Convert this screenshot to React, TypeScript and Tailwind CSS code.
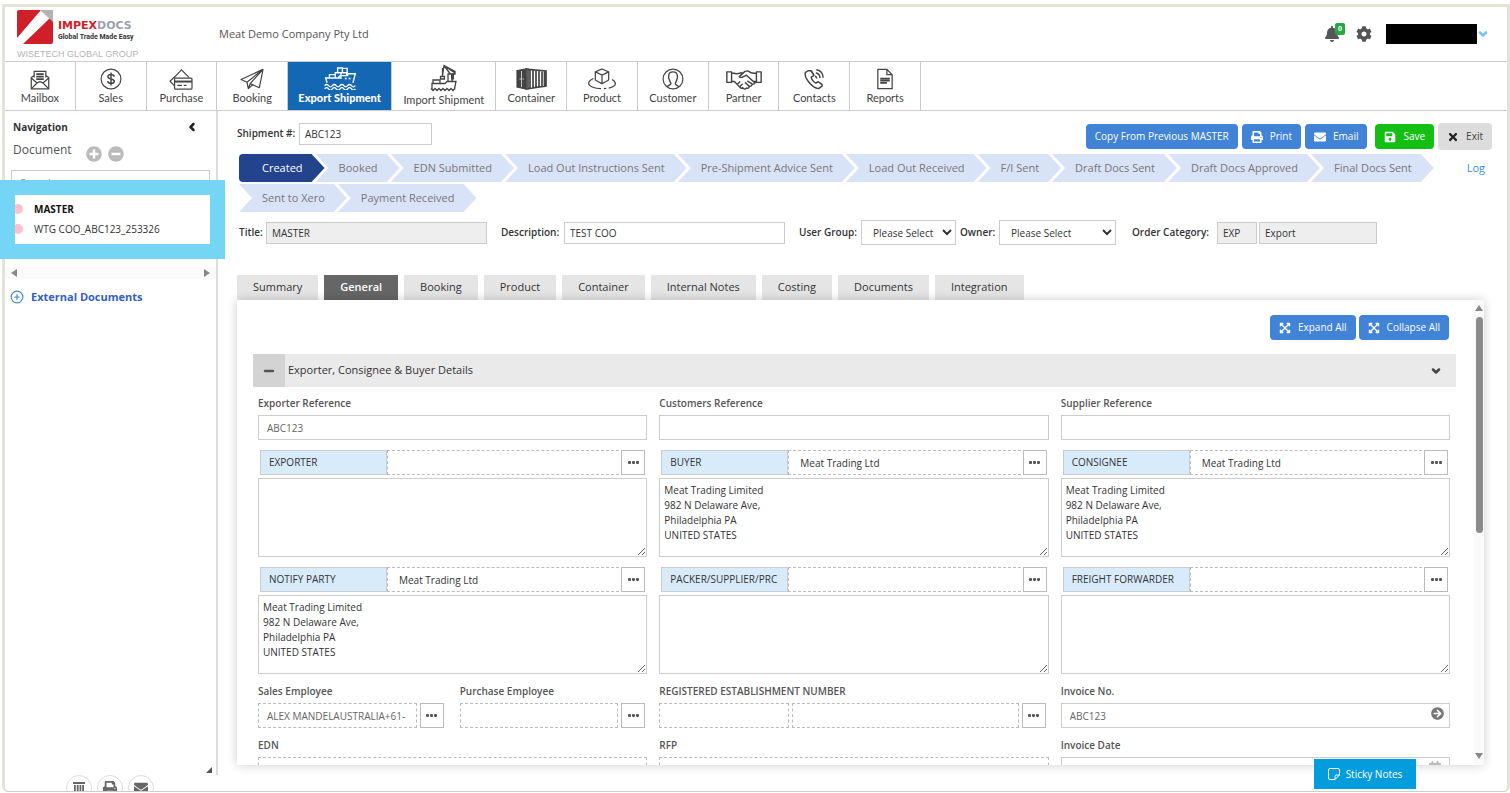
import type { ReactNode } from 'react'
import { FaArrowCircleRight, FaBell, FaCalendarAlt, FaCog, FaEnvelope, FaExpandArrowsAlt, FaMinusCircle, FaPlusCircle, FaPrint, FaSave, FaTimes } from 'react-icons/fa'
import { ChevronDown, ChevronLeft, CirclePlus, Minus } from 'lucide-react'

const icons: Record<string, ReactNode> = {
  Mailbox: (
    <svg viewBox="0 0 24 24" className="size-5" fill="none" stroke="currentColor" strokeWidth="1.5">
      <path d="M5 9V1.5h14V9M5 6.5 1.5 9v13.5h21V9L19 6.5" />
      <path d="M7.5 5h9M7.5 8h9M7.5 11h9" strokeWidth="2" />
      <path d="m1.5 9.5 7 6L2 22M22.5 9.5l-7 6L22 22M8.500 15.500 12 14l3.500 1.500" />
    </svg>
  ),
  Sales: (
    <svg viewBox="0 0 24 24" className="size-[22px]" fill="none" stroke="currentColor" strokeWidth="1.3">
      <circle cx="12" cy="12" r="10.8" />
      <path d="M15.500 9.500c-.3-1.500-1.600-2.300-3.500-2.300s-3.400.9-3.400 2.400c0 3.400 7 1.400 7 4.900 0 1.500-1.500 2.400-3.600 2.400-2 0-3.400-.9-3.600-2.500M12 5v14" strokeWidth="1.6" />
    </svg>
  ),
  Purchase: (
    <svg viewBox="0 0 26 24" className="h-[22px] w-6" fill="none" stroke="currentColor" strokeWidth="1.3">
      <path d="M5.500 10.500 13.500 2l8.500 8.500M6 9.500 1 14.500l5 5" />
      <rect x="6" y="11" width="19" height="12" rx="1" />
      <path d="M6 14.8h19" strokeWidth="2.2" />
      <path d="M9 19h5M16 19h3" />
    </svg>
  ),
  Booking: (
    <svg viewBox="0 0 26 24" className="h-[22px] w-6" fill="none" stroke="currentColor" strokeWidth="1.3" strokeLinejoin="round">
      <path d="M25 1.500 1 12.500l6.500 3L25 1.500 11 17l10 4.500L25 1.500M7.500 15.500l1.500 7L11 17M9 22.500l4.500-4" />
    </svg>
  ),
  'Export Shipment': (
    <svg viewBox="0 0 34 24" className="h-[23px] w-[34px]" fill="none" stroke="currentColor" strokeWidth="1.4">
      <path d="M3.500 16.500 2 11.500h13l2-2.500h8v-2h8l-2.500 9.500M12 6h6v5.500h-6zM18 6h6v3h-6M14.500 1h5v5h-5zM19.500 1.500h5V6h-5M6 8h6v3.500H6zM22 12h2M26 12h2" />
      <path d="M1 19.500q2-2.500 4 0t4 0 4 0 4 0 4 0 4 0 4 0 4 0M1 22.800q2-2.500 4 0t4 0 4 0 4 0 4 0 4 0 4 0 4 0" />
    </svg>
  ),
  'Import Shipment': (
    <svg viewBox="0 0 28 28" className="mt-0.5 size-7" fill="none" stroke="currentColor" strokeWidth="1.3">
      <path d="M2 25v-5.500h13l2-2h9L24.500 25M3 19.500V16h7v3.500M6 16h4M18 17.500V10h4v7.500M25 9 14 1.500 12.500 12M14 1.500l6 8M14 1.500l11 6V10h-5M12.500 4v8M10.500 12.500h4v2.500h-4z" />
      <path d="m1 24.500 2 2 2-2 2 2 2-2 2 2 2-2 2 2 2-2 2 2 2-2 2 2 2-2" />
      <path d="M22.500 9.500v6" strokeWidth="3" />
    </svg>
  ),
  Container: (
    <svg viewBox="0 0 31 22" className="h-[22px] w-[31px]" fill="none" stroke="currentColor" strokeWidth="1.2">
      <path d="m1 2.500 9-1.500v20L1 19z" fill="currentColor" />
      <path d="M10 1h2v20h-2zM12 1.300 30 3v15L12 20.700M14 2v18.500M17 2v18M20 2.200v17.500M23 2.500v17M26 2.800V19M28.500 3v15.500" strokeWidth="1.7" />
      <path d="M3.500 11H5M6.500 11H8M5.500 3v16" stroke="white" strokeWidth=".7" />
    </svg>
  ),
  Product: (
    <svg viewBox="0 0 30 23" className="h-[22px] w-[30px]" fill="none" stroke="currentColor" strokeWidth="1.3">
      <path d="m15 1 7 3v8.500l-7 4-7-4V4zM8 4l7 3.500L22 4M15 7.500v9M6 11c-3 1.500-5 3-5 5 0 3 6 5.500 13 5.500M17 21.500l2.500-.2M22 21c4-1 7-2.500 7-4.500 0-1.500-1-3-3.500-4.500" />
    </svg>
  ),
  Customer: (
    <svg viewBox="0 0 24 24" className="size-[22px]" fill="none" stroke="currentColor" strokeWidth="1.3">
      <circle cx="12" cy="12" r="10.8" />
      <path d="M5.500 20.500c1.500-1.500 4-2 4.200-3.500.1-1-.8-1.700-1.400-3.300C7.500 12 7 10 7.200 8.300 7.500 5.700 9.300 4.200 12 4.200s4.500 1.500 4.800 4.100c.2 1.700-.3 3.700-.9 5.400-.6 1.600-1.600 2.300-1.400 3.300.2 1.500 2.500 2 4 3.500" strokeWidth="1.5" />
    </svg>
  ),
  Partner: (
    <svg viewBox="0 0 38 22" className="h-[21px] w-[38px]" fill="none" stroke="currentColor" strokeWidth="1.5" strokeLinejoin="round">
      <path d="M1 3h5v11H1zM32 3h5v11h-5zM6 4.500h2.500q3 1 7-.5l3 .5M32 4.500h-2.500q-3 0-6.500-2.500l-3 .5-6 5.500q1.500 2 4.500 0l3-1.500 9 8q-1 2-3 1M6 13h3l6 6.500q2 1.500 3-.5M32 13h-2.500M27.500 15.500q0 3-3 2.500 0 2.500-3 2-1 1.500-3 .5l-1.500-1M12 16l3-3M14.500 18.500l3-3M20 14l4.500 4M22.500 12.500l5 3" />
    </svg>
  ),
  Contacts: (
    <svg viewBox="0 0 24 24" className="size-[22px]" fill="none" stroke="currentColor" strokeWidth="1.6" strokeLinejoin="round">
      <path d="M5.500 3 2.500 5C1 10 9 21.500 17 22.500l4-3-.5-2-4-2.500-2.500 1.500c-2-.5-5-4.500-5-6.500L12 8 9 3zM8.500 3 12 8M16.500 15l4 3" />
      <path d="M13 9c1.200.3 2 1.200 2 2.500M14 5.500c2.500.3 4.500 2.500 4.500 5.500M14.500 2c4.500.3 7.500 4 7.500 8.500" />
    </svg>
  ),
  Reports: (
    <svg viewBox="0 0 18 23" className="h-[22px] w-[18px]" fill="none" stroke="currentColor" strokeWidth="1.3">
      <path d="M1.500 1.500H11l5.500 5.500v14.500h-15zM11 1.500V7h5.500" />
      <path d="M4 11h10M4 13.300h10M4 15.600h7" strokeWidth="1.8" />
    </svg>
  ),
}

const menu = ['Mailbox', 'Sales', 'Purchase', 'Booking', 'Export Shipment', 'Import Shipment', 'Container', 'Product', 'Customer', 'Partner', 'Contacts', 'Reports']

const steps = [
  'Created',
  'Booked',
  'EDN Submitted',
  'Load Out Instructions Sent',
  'Pre-Shipment Advice Sent',
  'Load Out Received',
  'F/I Sent',
  'Draft Docs Sent',
  'Draft Docs Approved',
  'Final Docs Sent',
  'Sent to Xero',
  'Payment Received',
]

const tabs = ['Summary', 'General', 'Booking', 'Product', 'Container', 'Internal Notes', 'Costing', 'Documents', 'Integration']

const address = 'Meat Trading Limited\n982 N Delaware Ave,\nPhiladelphia PA\nUNITED STATES'

const parties = [
  { label: 'EXPORTER', name: '', details: '' },
  { label: 'BUYER', name: 'Meat Trading Ltd', details: address },
  { label: 'CONSIGNEE', name: 'Meat Trading Ltd', details: address },
  { label: 'NOTIFY PARTY', name: 'Meat Trading Ltd', details: address },
  { label: 'PACKER/SUPPLIER/PRC', name: '', details: '' },
  { label: 'FREIGHT FORWARDER', name: '', details: '' },
]

function Logo() {
  return (
    <div className="ml-3 w-[190px] shrink-0 pt-[3px]">
      <div className="flex items-end gap-[5px]">
        <svg viewBox="0 0 36 34" className="h-[34px] w-9">
          <path d="M2 0h22L0 28V2q0-2 2-2z" fill="#cf2029" />
          <path d="M34 34H6L33 8l3 2v22q0 2-2 2z" fill="#cf2029" />
          <path d="M23 0h13v12z" fill="#b3b3b3" />
        </svg>
        <div className="pb-0.5">
          <p className="font-['DejaVu_Sans'] text-[11px] leading-3 font-bold text-gray-400">
            <span className="text-[#cf2029]">IMPEX</span>DOCS
          </p>
          <p className="font-['Roboto'] text-[7px] leading-[10px] font-bold whitespace-nowrap text-[#333]">Global Trade Made Easy</p>
        </div>
      </div>
      <p className="mt-1 font-['Liberation_Sans'] text-[9px] leading-3 whitespace-nowrap text-[#b5b5b5]">WISETECH GLOBAL GROUP</p>
    </div>
  )
}

function Header() {
  return (
    <header className="flex h-[55px] shrink-0 border-b border-[#ccc]">
      <Logo />
      <p className="flex-1 self-center pl-3 text-[11px] text-[#555]">Meat Demo Company Pty Ltd</p>
      <div className="flex items-center pr-[18px] text-[#555]">
        <button aria-label="Notifications" className="relative mr-4">
          <FaBell className="size-4" />
          <span className="absolute -top-[3px] left-[11px] rounded-xs bg-[#28a745] px-[3px] text-[7px] leading-3 font-bold text-white">0</span>
        </button>
        <button aria-label="Settings" className="mr-3.5">
          <FaCog className="size-4" />
        </button>
        <div className="h-5 w-[91px] bg-black" />
        <button aria-label="Account">
          <ChevronDown className="size-3 text-[#7cc0f5]" strokeWidth={5} />
        </button>
      </div>
    </header>
  )
}

function MainMenu() {
  return (
    <nav className="flex h-[49px] shrink-0 border-b border-[#ccc] font-['Lato']">
      <div className="flex w-[916px]">
        {menu.map((item) => {
          const active = item === 'Export Shipment'
          const wide = item.endsWith('Shipment')
          return (
            <a
              key={item}
              href="#"
              className={`flex min-w-0 basis-0 flex-col items-center border-r border-[#ccc] text-[11px] leading-4 whitespace-nowrap ${wide ? 'grow-[105]' : 'grow-[71]'} ${
                active ? 'bg-[#1467b3] font-black text-white' : 'text-[#444]'
              }`}
            >
              <span className="flex min-h-7 items-end justify-center">{icons[item]}</span>
              {item}
            </a>
          )
        })}
      </div>
    </nav>
  )
}

function Sidebar() {
  return (
    <aside className="relative flex w-[213px] shrink-0 flex-col">
      <div className="flex flex-1 flex-col border-r-2 border-[#ddd]">
        <div className="flex items-center justify-between pt-2 pr-[18px] pl-2">
          <h2 className="text-[10px] leading-4 font-bold text-[#333]">Navigation</h2>
          <button aria-label="Collapse navigation">
            <ChevronLeft className="size-3 text-[#222]" strokeWidth={5} />
          </button>
        </div>
        <div className="mt-[7px] flex items-start gap-1.5 pl-2 text-[#bbb]">
          <span className="mr-2 text-xs leading-4 text-[#555]">Document</span>
          <button aria-label="Add document">
            <FaPlusCircle className="mt-1 size-4" />
          </button>
          <button aria-label="Remove document">
            <FaMinusCircle className="mt-1 size-4" />
          </button>
        </div>
        <input aria-label="Search" placeholder="Search" className="mx-1.5 mt-2 h-6 shrink-0 border border-[#ccc] px-2 text-[11px] placeholder:text-[#888]" />
        <ul className="mt-[5px] pl-2 text-[10px] leading-5 text-[#333]">
          <li className="flex items-center gap-[11px]">
            <span className="size-2.5 rounded-full bg-[#ffc0cb]" />
            <a href="#" className="font-bold text-[#111]">MASTER</a>
          </li>
          <li className="flex items-center gap-[11px]">
            <span className="size-2.5 rounded-full bg-[#ffc0cb]" />
            <a href="#">WTG COO_ABC123_253326</a>
          </li>
        </ul>
        <div className="mt-7 flex h-3 items-center justify-between bg-[#fafafa] px-1.5 text-[#888]">
          <svg viewBox="0 0 6 8" className="h-2 w-1.5" fill="currentColor"><path d="M6 0v8L0 4z" /></svg>
          <svg viewBox="0 0 6 8" className="h-2 w-1.5" fill="currentColor"><path d="M0 0v8l6-4z" /></svg>
        </div>
        <a href="#" className="mt-2.5 flex items-center gap-[7px] pl-[5px] text-[11px] leading-4 font-bold text-[#335fc4]">
          <CirclePlus className="size-3.5 text-[#3f8bd0]" />
          External Documents
        </a>
        <svg viewBox="0 0 6 6" className="mt-auto mr-1 mb-0.5 size-1.5 self-end" fill="#555"><path d="M6 0v6H0z" /></svg>
      </div>
      <div className="flex h-4 shrink-0 justify-center gap-[5px] overflow-hidden pr-1 text-[#666]">
        <button aria-label="Delete" className="flex size-[26px] items-center justify-center rounded-full border border-[#ddd]">
          <svg viewBox="0 0 12 12" className="size-3" fill="currentColor"><path d="M0 0h12v2H0zM1 3h1.800v9H1zM3.800 3h1.800v9H3.800zM6.500 3h1.800v9H6.500zM9.200 3H11v9H9.200z" /></svg>
        </button>
        <button aria-label="Print" className="flex size-[26px] items-center justify-center rounded-full border border-[#ddd]">
          <FaPrint className="size-3.5" />
        </button>
        <button aria-label="Email" className="flex size-[26px] items-center justify-center rounded-full border border-[#ddd]">
          <FaEnvelope className="size-3.5" />
        </button>
      </div>
      {/* highlight around the document tree */}
      <div className="pointer-events-none absolute top-[69px] -left-[5px] h-[79px] w-[225px] border-[15px] border-[#74d6f4]" />
    </aside>
  )
}

function Action({ icon, children }: { icon?: ReactNode; children: ReactNode }) {
  return (
    <button className="flex h-[25px] items-center gap-[7px] rounded-sm bg-[#4183d7] px-[9px] text-[10px] whitespace-nowrap text-white">
      {icon}
      {children}
    </button>
  )
}

function Progress() {
  return (
    <div className="mt-1 flex items-start">
      <ol className="flex w-[1220px] flex-wrap gap-y-0.5 pl-[11px] text-[11px] leading-7">
        {steps.map((step, i) => (
          <li
            key={step}
            className={`-ml-[9px] pr-[22px] pl-[23px] whitespace-nowrap ${
              i === 0
                ? 'rounded-l-sm bg-[#23448c] text-white [clip-path:polygon(0_0,calc(100%-13px)_0,100%_50%,calc(100%-13px)_100%,0_100%)]'
                : 'bg-[#d9e3f7] text-[#777] [clip-path:polygon(0_0,calc(100%-13px)_0,100%_50%,calc(100%-13px)_100%,0_100%,13px_50%)]'
            }`}
          >
            {step}
          </li>
        ))}
      </ol>
      <a href="#" className="ml-auto text-[11px] leading-7 text-[#2e8ff0]">Log</a>
    </div>
  )
}

const labelStyle = 'text-[10px] font-semibold whitespace-nowrap text-[#333]'
const boxStyle = 'h-[22px] border border-[#ccc] px-[5px] text-[10px] text-[#333]'

function TitleRow() {
  return (
    <div className="mt-2 flex h-[25px] items-center pl-0.5">
      <label htmlFor="title" className={`${labelStyle} w-[27px]`}>Title:</label>
      <input id="title" readOnly defaultValue="MASTER" className={`${boxStyle} w-[221px] bg-[#eee]`} />
      <label htmlFor="description" className={`${labelStyle} ml-3.5 w-[63px]`}>Description:</label>
      <input id="description" defaultValue="TEST COO" className={`${boxStyle} w-[221px]`} />
      <label htmlFor="group" className={`${labelStyle} ml-3.5 w-[62px]`}>User Group:</label>
      <select id="group" className="h-[25px] w-[95px] border border-[#ccc] bg-white pl-[7px] text-[10px] text-[#333]">
        <option>Please Select</option>
      </select>
      <label htmlFor="owner" className={`${labelStyle} ml-1 w-[39px]`}>Owner:</label>
      <select id="owner" className="h-[25px] w-[117px] border border-[#ccc] bg-white pl-[7px] text-[10px] text-[#333]">
        <option>Please Select</option>
      </select>
      <label htmlFor="category" className={`${labelStyle} ml-4 w-[85px]`}>Order Category:</label>
      <input id="category" readOnly defaultValue="EXP" className={`${boxStyle} w-10 bg-[#eee]`} />
      <input aria-label="Category name" readOnly defaultValue="Export" className={`${boxStyle} ml-0.5 w-[118px] bg-[#eee]`} />
    </div>
  )
}

const fieldLabel = 'mb-1 block text-[10px] leading-4 font-semibold whitespace-nowrap text-[#555]'
const fieldBox = 'block h-[25px] w-full min-w-0 border border-[#ccc] px-2 text-[10px] text-[#666]'
const dashed = 'block h-[25px] min-w-0 border border-dashed border-[#bbb] px-2 text-[10px] text-[#666]'

function More({ label }: { label: string }) {
  return (
    <button aria-label={`Look up ${label}`} className="flex h-[25px] w-6 shrink-0 items-center justify-center border border-[#bbb] text-[#555]">
      <svg viewBox="0 0 11 3" className="h-[3px] w-[11px]" fill="currentColor">
        <rect width="3" height="3" rx="1" />
        <rect x="4" width="3" height="3" rx="1" />
        <rect x="8" width="3" height="3" rx="1" />
      </svg>
    </button>
  )
}

function Party({ label, name, details }: { label: string; name: string; details: string }) {
  return (
    <div>
      <div className="flex px-0.5">
        <label htmlFor={label} className="h-[25px] w-[127px] shrink-0 border border-[#ccc] bg-[#d8ebfa] pl-2 text-[10px] leading-[23px] whitespace-nowrap text-[#333]">
          {label}
        </label>
        <input id={label} defaultValue={name} className="mr-0.5 h-[25px] min-w-0 flex-1 border border-r-0 border-dashed border-[#bbb] pl-[11px] text-[10px] text-[#333]" />
        <More label={label} />
      </div>
      <textarea aria-label={`${label} details`} defaultValue={details} className="mt-[3px] block h-[79px] w-full border border-[#ccc] px-1 py-1 text-[10px] leading-[15px] text-[#333]" />
    </div>
  )
}

function GeneralPanel() {
  return (
    <section className="mr-[23px] flex min-h-0 flex-1 bg-white shadow-[0_0_10px_rgba(0,0,0,0.2)]">
      <div className="min-w-0 flex-1 overflow-y-auto pt-[15px] pr-[18px] pl-4 [scrollbar-width:none]">
        <div className="mr-[7px] flex justify-end gap-[3px]">
          <Action icon={<FaExpandArrowsAlt className="size-3" />}>Expand All</Action>
          <Action icon={<FaExpandArrowsAlt className="size-3" />}>Collapse All</Action>
        </div>
        <div className="mt-3.5 flex h-[33px] items-center bg-[#eaeaea]">
          <button aria-label="Toggle section" className="flex h-full w-8 items-center justify-center bg-[#d3d3d3]">
            <Minus className="size-3.5 text-[#555]" strokeWidth={4} />
          </button>
          <h3 className="ml-[3px] text-[11px] text-[#333]">Exporter, Consignee &amp; Buyer Details</h3>
          <ChevronDown className="mr-3.5 ml-auto size-3 text-[#444]" strokeWidth={5} />
        </div>
        <div className="mr-1.5 ml-[5px] pt-2">
          <div className="grid grid-cols-3 gap-x-3">
            <div>
              <label htmlFor="exporter-ref" className={fieldLabel}>Exporter Reference</label>
              <input id="exporter-ref" defaultValue="ABC123" className={fieldBox} />
            </div>
            <div>
              <label htmlFor="customer-ref" className={fieldLabel}>Customers Reference</label>
              <input id="customer-ref" className={fieldBox} />
            </div>
            <div>
              <label htmlFor="supplier-ref" className={fieldLabel}>Supplier Reference</label>
              <input id="supplier-ref" className={fieldBox} />
            </div>
          </div>
          <div className="mt-2.5 grid grid-cols-3 gap-x-3 gap-y-2.5">
            {parties.map((party) => (
              <Party key={party.label} {...party} />
            ))}
          </div>
          <div className="mt-[9px] grid grid-cols-3 gap-x-3 gap-y-[9px]">
            <div className="flex gap-4">
              <div className="min-w-0 flex-1">
                <label htmlFor="sales" className={fieldLabel}>Sales Employee</label>
                <div className="flex gap-[3px]">
                  <input id="sales" defaultValue="ALEX MANDELAUSTRALIA+61-" className={`${dashed} flex-1`} />
                  <More label="sales employee" />
                </div>
              </div>
              <div className="min-w-0 flex-1 pr-0.5">
                <label htmlFor="purchase" className={fieldLabel}>Purchase Employee</label>
                <div className="flex gap-[3px]">
                  <input id="purchase" className={`${dashed} flex-1`} />
                  <More label="purchase employee" />
                </div>
              </div>
            </div>
            <div>
              <label htmlFor="establishment" className={fieldLabel}>REGISTERED ESTABLISHMENT NUMBER</label>
              <div className="flex gap-[3px] pr-[3px]">
                <input id="establishment" className={`${dashed} w-[130px]`} />
                <input aria-label="Establishment name" className={`${dashed} flex-1`} />
                <More label="establishment" />
              </div>
            </div>
            <div>
              <label htmlFor="invoice" className={fieldLabel}>Invoice No.</label>
              <div className="relative">
                <input id="invoice" defaultValue="ABC123" className={fieldBox} />
                <FaArrowCircleRight className="absolute top-1 right-1.5 size-[13px] text-[#777]" />
              </div>
            </div>
            <div>
              <label htmlFor="edn" className={fieldLabel}>EDN</label>
              <input id="edn" className={`${dashed} w-full`} />
            </div>
            <div>
              <label htmlFor="rfp" className={fieldLabel}>RFP</label>
              <input id="rfp" className={`${dashed} w-full`} />
            </div>
            <div>
              <label htmlFor="invoice-date" className={fieldLabel}>Invoice Date</label>
              <div className="relative">
                <input id="invoice-date" className={fieldBox} />
                <FaCalendarAlt className="absolute top-1 right-2 size-3.5 text-[#bbb]" />
              </div>
            </div>
          </div>
        </div>
      </div>
      <div className="flex w-2.5 shrink-0 flex-col items-center bg-[#fafafa] pt-[5px] pb-1.5 text-[#888]">
        <svg viewBox="0 0 8 6" className="h-1.5 w-2" fill="currentColor"><path d="M0 6h8L4 0z" /></svg>
        <div className="mt-1.5 h-[216px] w-[7px] rounded-full bg-[#8b8b8b]" />
        <svg viewBox="0 0 8 6" className="mt-auto h-1.5 w-2" fill="currentColor"><path d="M0 0h8L4 6z" /></svg>
      </div>
    </section>
  )
}

export default function App() {
  return (
    <div className="h-screen overflow-hidden bg-white pt-1 pb-px pl-0.5 font-['Open_Sans',sans-serif]">
      <div className="flex h-full flex-col rounded-b-md border-x-[3px] border-t-[3px] border-b border-x-[#e2e4d8] border-t-[#e2e4d8] border-b-[#ccc]">
        <Header />
        <MainMenu />
        <div className="flex min-h-0 flex-1">
          <Sidebar />
          <main className="relative flex min-w-0 flex-1 flex-col pt-3 pb-[26px] pl-[19px]">
            <div className="flex h-[27px] items-center pr-[15px]">
              <label htmlFor="shipment" className={`${labelStyle} mb-1.5 w-[62px]`}>Shipment #:</label>
              <input id="shipment" defaultValue="ABC123" className={`${boxStyle} mb-1.5 w-[133px]`} />
              <div className="ml-auto flex items-center gap-1">
                <Action>Copy From Previous MASTER</Action>
                <Action icon={<FaPrint className="size-3" />}>Print</Action>
                <Action icon={<FaEnvelope className="size-3" />}>Email</Action>
                <button className="ml-1 flex h-[25px] items-center gap-[7px] rounded-sm bg-[#14bf14] px-[9px] text-[10px] text-white">
                  <FaSave className="size-3" />
                  Save
                </button>
                <button className="flex h-[27px] items-center gap-[7px] rounded-sm bg-[#ddd] px-[9px] text-[10px] text-[#444]">
                  <FaTimes className="size-3 text-[#222]" />
                  Exit
                </button>
              </div>
            </div>
            <div className="pr-[22px]">
              <Progress />
            </div>
            <TitleRow />
            <div role="tablist" className="mt-[30px] flex gap-1.5">
              {tabs.map((tab) => (
                <button
                  key={tab}
                  role="tab"
                  aria-selected={tab === 'General'}
                  className={`h-[25px] px-4 text-[11px] whitespace-nowrap ${tab === 'General' ? 'bg-[#666] font-semibold text-white' : 'bg-[#e5e5e5] text-[#333]'}`}
                >
                  {tab}
                </button>
              ))}
            </div>
            <GeneralPanel />
            <button className="absolute right-[91px] bottom-0.5 flex h-[30px] w-[102px] items-center justify-center gap-1.5 bg-[#039ddd] text-[10px] text-white">
              <svg viewBox="0 0 12 12" className="size-3" fill="none" stroke="currentColor">
                <path d="M.5 2q0-1.500 1.500-1.500h8q1.500 0 1.500 1.500v5l-4.500 4.500H2Q.5 11.500.5 10zM7 11.500V8.500Q7 7 8.500 7h3" />
              </svg>
              Sticky Notes
            </button>
          </main>
        </div>
      </div>
    </div>
  )
}
